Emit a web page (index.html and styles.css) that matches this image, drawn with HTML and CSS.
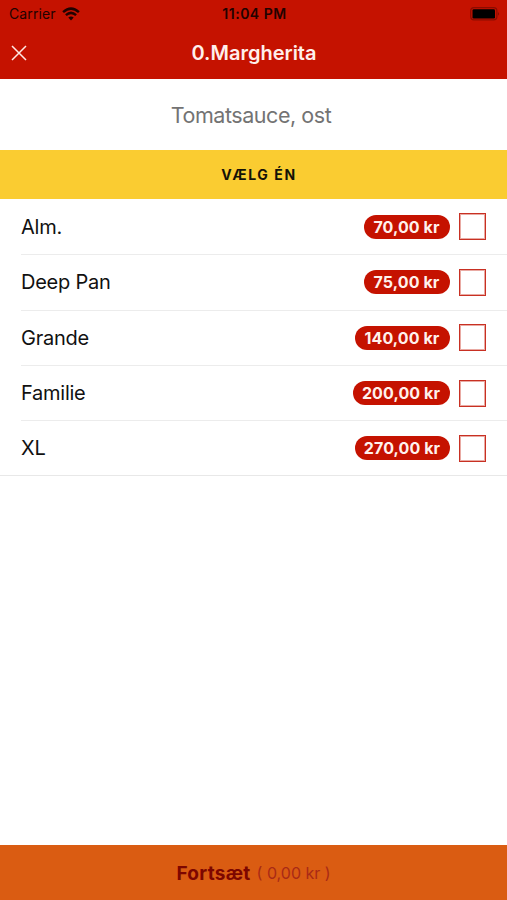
FILE: index.html
```html
<!DOCTYPE html>
<html lang="da">
<head>
<meta charset="utf-8">
<title>0.Margherita</title>
<link rel="stylesheet" href="styles.css">
</head>
<body>
<header class="header">
  <div class="status">
    <div class="carrier"><span class="carrier-name">Carrier</span>
      <svg class="wifi" viewBox="0 0 18 14"><path d="M9 13.4 6.3 10.6Q9 8.5 11.7 10.6Z" fill="#210200"/><path d="M1.1 5.1Q9-1.9 16.9 5.1M3.9 8.1Q9 3.7 14.1 8.1" fill="none" stroke="#210200" stroke-width="2.5"/></svg>
    </div>
    <span class="time">11:04 PM</span>
    <svg class="battery" viewBox="0 0 30 14"><rect x=".7" y=".7" width="26.2" height="12.2" rx="3.3" fill="none" stroke="#8b0c00" stroke-width="1.2"/><rect x="2.5" y="2.2" width="22.5" height="9.3" rx="1.3" fill="#000"/><path d="M28.2 4.8Q30 6.8 28.2 8.8Z" fill="#790a00"/></svg>
  </div>
  <div class="nav">
    <svg class="close" viewBox="0 0 16 16"><path d="M1 1 15 15M15 1 1 15" stroke="#ffe9e3" stroke-width="1.5" fill="none"/></svg>
    <h1 class="title">0.Margherita</h1>
  </div>
</header>
<p class="description">Tomatsauce, ost</p>
<h2 class="section">VÆLG ÉN</h2>
<ul class="options">
  <li class="option"><span class="name">Alm.</span><span class="price narrow">70,00 kr</span><span class="check"></span></li>
  <li class="option"><span class="name">Deep Pan</span><span class="price narrow">75,00 kr</span><span class="check"></span></li>
  <li class="option"><span class="name">Grande</span><span class="price">140,00 kr</span><span class="check"></span></li>
  <li class="option"><span class="name">Familie</span><span class="price wide">200,00 kr</span><span class="check"></span></li>
  <li class="option"><span class="name">XL</span><span class="price">270,00 kr</span><span class="check"></span></li>
</ul>
<footer class="footer"><span class="continue">Fortsæt</span><span class="total">( 0,00 kr )</span></footer>
</body>
</html>
```

FILE: styles.css
```css
* { box-sizing: border-box; }
body {
  margin: 0;
  height: 900px;
  display: flex;
  flex-direction: column;
  overflow: hidden;
  background: #fff;
  color: #111;
  font-family: Inter, "Liberation Sans", sans-serif;
}
.header { height: 79px; background: #c51200; flex: none; }
.status {
  height: 27px;
  display: grid;
  grid-template-columns: 1fr auto 1fr;
  align-items: center;
  padding: 0 7px 0 9px;
  color: #210200;
}
.carrier { display: flex; align-items: center; gap: 6px; font-size: 14px; }
.carrier-name { letter-spacing: 0.1px; }
.wifi { width: 18px; height: 14px; }
.time { font-size: 14px; font-weight: 600; letter-spacing: 0.5px; }
.battery { width: 30px; height: 14px; justify-self: end; }
.nav {
  height: 51px;
  display: grid;
  grid-template-columns: 16px 1fr 16px;
  align-items: center;
  padding: 0 10px 0 11px;
}
.close { width: 16px; height: 16px; }
.title {
  margin: 0;
  color: #ffefeb;
  text-align: center;
  font-size: 20px;
  line-height: 50px;
  font-weight: 600;
}
.description, .section {
  margin: 0;
  display: flex;
  align-items: center;
  justify-content: center;
  flex: none;
}
.description {
  height: 71px;
  padding: 0 5px 0 0;
  font-size: 21.5px;
  letter-spacing: -0.45px;
  color: #737373;
}
.section {
  height: 49px;
  padding-left: 11px;
  background: #facc31;
  color: #151207;
  font-size: 14px;
  font-weight: 700;
  letter-spacing: 1.6px;
}
.options { margin: 0; padding: 0; list-style: none; border-bottom: 1px solid #e8e8e8; }
.option {
  height: 55.3px;
  display: flex;
  align-items: center;
  margin-left: 21px;
  padding-right: 21px;
}
.option + .option { border-top: 1px solid #ececec; }
.name { flex: 1; font-size: 20px; letter-spacing: -0.25px; }
.price {
  height: 24px;
  width: 95px;
  border-radius: 12px;
  background: #c51200;
  color: #fff1ed;
  font-size: 16px;
  font-weight: 700;
  line-height: 24px;
  letter-spacing: 0.1px;
  text-align: center;
  white-space: nowrap;
}
.narrow { width: 86px; }
.wide { width: 97px; }
.check {
  width: 27px;
  height: 27px;
  margin-left: 9.5px;
  border: 1px solid #c83023;
  box-shadow: inset 0 0 0 1px #e9aaa3;
}
.footer {
  height: 55px;
  margin-top: auto;
  padding-top: 1px;
  display: flex;
  align-items: center;
  justify-content: center;
  gap: 6px;
  background: #da5c12;
}
.continue { color: #7d0600; font-size: 19px; font-weight: 700; letter-spacing: 0.3px; }
.total { color: #a92a16; font-size: 16px; }
```
